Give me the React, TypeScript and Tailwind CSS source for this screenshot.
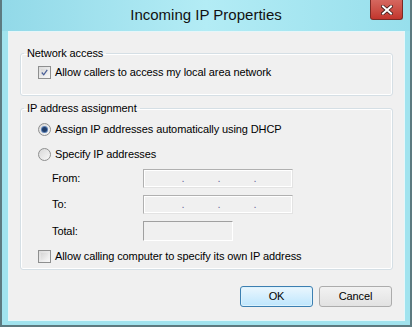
import React from 'react';

const font = { fontFamily: '"Liberation Sans", Arial, sans-serif' };

function Checkbox({ checked }: { checked?: boolean }) {
  return (
    <span className="flex h-[13px] w-[13px] shrink-0 items-center justify-center border border-[#8e8f8f] bg-gradient-to-br from-[#dcdcdc] to-[#f8f8f8] p-[2px]">
      <span className="flex h-full w-full items-center justify-center bg-gradient-to-br from-[#d6d6d6] to-[#f4f4f4]">
        {checked && (
          <svg width="9" height="9" viewBox="0 0 9 9">
            <path d="M1 4.5 L3.5 7.5 L8 1" fill="none" stroke="#4a5f97" strokeWidth="1.6" />
          </svg>
        )}
      </span>
    </span>
  );
}

function Radio({ checked }: { checked?: boolean }) {
  return (
    <span className="flex h-[13px] w-[13px] shrink-0 items-center justify-center rounded-full border border-[#8e8f8f] bg-gradient-to-br from-[#d8d8d8] to-[#f8f8f8]">
      {checked && (
        <span className="h-[5px] w-[5px] rounded-full bg-[#1f3d69] shadow-[0_0_0_1px_#5a7fb5]" />
      )}
    </span>
  );
}

function IpBox() {
  return (
    <div className="flex h-[19px] w-[150px] items-center border border-[#b0b0b0] border-b-[#e3e3e3] border-r-[#e3e3e3] shadow-[inset_0_0_0_1px_#ffffff]">
      <div className="flex pl-[21px] text-[11px] leading-none text-[#6d6d9d]">
        <span className="w-[36px] text-center">.</span>
        <span className="w-[36px] text-center">.</span>
        <span className="w-[36px] text-center">.</span>
      </div>
    </div>
  );
}

export default function App() {
  return (
    <div
      className="flex h-[327px] w-[412px] flex-col border-x-2 border-b-2 border-[#5d7a80] bg-[#a1e3ee] text-[11px] tracking-[-0.1px] text-black"
      style={font}
    >
      {/* Title bar */}
      <div className="relative flex h-[31px] shrink-0 items-center justify-center bg-gradient-to-r from-[#92d9e8] via-[#b3ecf5] to-[#97dfec]">
        <span className="pb-[1px] text-[15px] tracking-normal text-[#111]">Incoming IP Properties</span>
        <button className="absolute right-[7px] top-0 flex h-[20px] w-[33px] items-center justify-center rounded-b-[3px] border border-t-0 border-[#7a2b26] bg-gradient-to-b from-[#d5675f] to-[#c2352d]">
          <svg width="12" height="10" viewBox="0 0 12 10">
            <path d="M2 1.5 L10 8.5 M10 1.5 L2 8.5" stroke="#3b1a18" strokeWidth="3.6" strokeLinecap="square" />
            <path d="M2 1.5 L10 8.5 M10 1.5 L2 8.5" stroke="#ffffff" strokeWidth="2" strokeLinecap="square" />
          </svg>
        </button>
      </div>

      {/* Client area */}
      <div className="ml-[6px] mr-[5px] mb-[4px] flex flex-1 flex-col border border-[#e6f6f9] bg-[#f0f0f0] px-[11px] pt-[13px]">
        <fieldset className="h-[51px] rounded-[3px] border border-[#d5dfe5] pl-[17px] pt-[3px] shadow-[inset_0_0_0_1px_#ffffff]">
          <legend className="-ml-[14px] px-[3px] leading-[16px]">Network access</legend>
          <label className="flex items-center gap-[4px]">
            <Checkbox checked />
            <span>Allow callers to access my local area network</span>
          </label>
        </fieldset>

        <fieldset className="mt-[4px] h-[170px] rounded-[3px] border border-[#d5dfe5] pl-[17px] pt-[7px] shadow-[inset_0_0_0_1px_#ffffff]">
          <legend className="-ml-[14px] px-[3px] leading-[16px]">IP address assignment</legend>
          <label className="flex h-[13px] items-center gap-[4px]">
            <Radio checked />
            <span>Assign IP addresses automatically using DHCP</span>
          </label>
          <label className="mt-[12px] flex h-[13px] items-center gap-[4px]">
            <Radio />
            <span>Specify IP addresses</span>
          </label>
          <div className="pl-[14px]">
            <div className="mt-[8px] flex h-[19px] items-center">
              <span className="w-[91px]">From:</span>
              <IpBox />
            </div>
            <div className="mt-[7px] flex h-[19px] items-center">
              <span className="w-[91px]">To:</span>
              <IpBox />
            </div>
            <div className="mt-[7px] flex h-[20px] items-center">
              <span className="w-[91px]">Total:</span>
              <div className="h-[20px] w-[90px] border border-[#a0a0a0] border-b-[#ffffff] border-r-[#ffffff]" />
            </div>
          </div>
          <label className="mt-[9px] flex h-[13px] items-center gap-[4px]">
            <Checkbox />
            <span>Allow calling computer to specify its own IP address</span>
          </label>
        </fieldset>

        <div className="mt-[16px] flex justify-end gap-[6px] pr-[1px]">
          <button className="h-[21px] w-[73px] rounded-[3px] border border-[#3c7fb1] bg-gradient-to-b from-[#eaf6fd] to-[#bee6fd] shadow-[inset_0_0_0_1px_#ddf2fc]">
            OK
          </button>
          <button className="h-[21px] w-[73px] rounded-[3px] border border-[#acacac] bg-gradient-to-b from-[#f2f2f2] to-[#e2e2e2]">
            Cancel
          </button>
        </div>
      </div>
    </div>
  );
}
